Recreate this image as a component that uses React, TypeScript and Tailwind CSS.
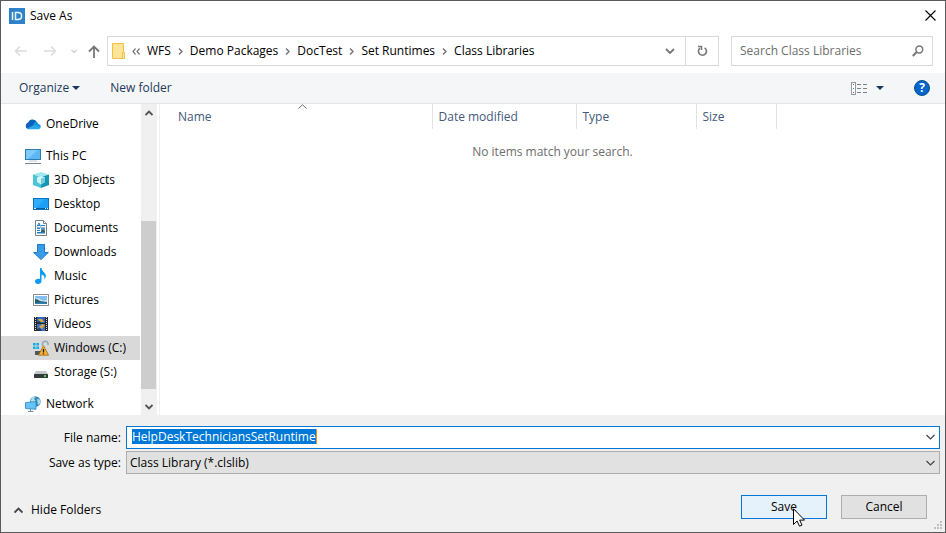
import { useEffect, useRef, type ReactNode } from "react";

type StrokeProps = { className?: string; d: string; w: number; h: number; sw?: number };

function Stroke({ className = "", d, w, h, sw = 1 }: StrokeProps) {
  return (
    <svg aria-hidden="true" className={`shrink-0 ${className}`} width={w} height={h} viewBox={`0 0 ${w} ${h}`} fill="none" stroke="currentColor" strokeWidth={sw}>
      <path d={d} />
    </svg>
  );
}

function Icon({ children }: { children: ReactNode }) {
  return (
    <svg aria-hidden="true" className="shrink-0" width="16" height="16" viewBox="0 0 16 16">
      {children}
    </svg>
  );
}

const icons: Record<string, ReactNode> = {
  OneDrive: (
    <Icon>
      <path d="M3.2 7A4.6 4.6 0 0 1 11.8 6L10 10 3 9Z" fill="#0364b8" />
      <path d="M3.5 13.2A3.4 3.4 0 0 1 3.7 6.5Q5.4 6.2 6.8 7.4L10 10 4 13.2Z" fill="#0f5fbd" />
      <path d="M8 8.2Q9.5 5.6 12 6.2 13 6.5 13.2 8 15.6 8.4 15.9 10.6L14 12Z" fill="#1490df" />
      <path d="M2 12.6L9.4 8.7 15.8 11.3Q15.2 13.3 13.2 13.3H3.6Z" fill="#28a8ea" />
    </Icon>
  ),
  "This PC": (
    <Icon>
      <rect x="0.5" y="1.5" width="15" height="10" fill="#5cb8f5" stroke="#2e7cab" />
      <path d="M1 2H13L3 11H1Z" fill="#8bd2ff" opacity=".7" />
      <rect x="4" y="12.5" width="8" height="1" fill="#b9c8d4" />
      <rect x="0" y="15" width="16" height="1" fill="#73899c" />
    </Icon>
  ),
  "3D Objects": (
    <Icon>
      <path d="M8 0L16 2.4 8 5 0 2.4Z" fill="#a2e6ef" />
      <path d="M0 2.4L8 5V16L0 13Z" fill="#4cc5d6" />
      <path d="M16 2.4L8 5V16L16 13Z" fill="#1696b2" />
      <path d="M4 5.3L8 4 12 5.3V10L8 12.5 4 10Z" fill="#d1f5f7" />
      <path d="M8 6.5L12 5.3V10L8 12.5Z" fill="#71cedc" />
    </Icon>
  ),
  Desktop: (
    <Icon>
      <rect x="0.5" y="2.5" width="15" height="11" fill="#1ca0f5" stroke="#0873c5" />
      <path d="M1 3H12L3 12H1Z" fill="#40b9ff" opacity=".5" />
      <path d="M0 12.5H16" stroke="#075b9b" />
      <path d="M1 12.5H3M12 12.5H13M14 12.5H15" stroke="#d5efff" />
    </Icon>
  ),
  Documents: (
    <Icon>
      <path d="M2.5 .5H10.5L13.5 3.5V15.5H2.5Z" fill="#fff" stroke="#777f87" />
      <path d="M10.5 .5V3.5H13.5" fill="#edf0f2" stroke="#777f87" />
      <path d="M4 6.5L6 3 7.5 6.5M4.5 5.5H7M8 5.5H12M4 8.5H7M4 10.5H7M4 12.5H12" fill="none" stroke="#1782c7" />
      <path d="M4 7.5H12M4 13.5H12" stroke="#9fb6c6" />
      <rect x="8" y="8" width="4" height="4" fill="#4e9bc8" />
      <path d="M8 12V11L10 9.5 12 11V12Z" fill="#3d5f56" />
    </Icon>
  ),
  Downloads: (
    <Icon>
      <path d="M4.5 .5H11.5V8.5H15.3L8 15.6 .7 8.5H4.5Z" fill="#389be8" stroke="#1d7aca" />
    </Icon>
  ),
  Music: (
    <Icon>
      <path d="M7 0H8.5C8.7 3.5 13 4.5 12.8 8.2 12.7 9.9 11.7 11 11.2 11.4 12 8.7 10.8 7.4 8.5 6.6V13C8.5 15 6.8 16 5 16 3.3 16 2 15 2 13.5 2 11.5 4.2 10.3 7 11Z" fill="#0a9cf5" />
    </Icon>
  ),
  Pictures: (
    <Icon>
      <rect x="0.5" y="2.5" width="15" height="11" fill="#fff" stroke="#8a8f94" />
      <rect x="2" y="4" width="12" height="8" fill="#83bff0" />
      <path d="M2 7Q5 5 8 8 11 9 14 8V10H2Z" fill="#d8eef5" />
      <path d="M2 7Q5 7 7 9L14 10V12H2Z" fill="#265b65" />
      <path d="M2 11Q8 9 14 11V12H2Z" fill="#347bb0" />
    </Icon>
  ),
  Videos: (
    <Icon>
      <rect x="1" y="1" width="14" height="14" fill="#27272b" />
      <path d="M2.5 1V15M13.5 1V15" stroke="#d7d7d7" strokeDasharray="1 1" />
      <rect x="4" y="1" width="8" height="6" fill="#2f63bc" />
      <rect x="4" y="8" width="8" height="7" fill="#3e72c9" />
      <path d="M5 3H9L11 6H7ZM6 11L9 8 12 9 9 13Z" fill="#d6a73c" />
      <path d="M4 6L7 5 8 7H4ZM4 13L7 12 9 15H4Z" fill="#263b58" />
    </Icon>
  ),
  "Windows (C:)": (
    <Icon>
      <path d="M0 3H2.6V5.6H0ZM3.4 3H6V5.6H3.4ZM0 6.4H2.6V9H0ZM3.4 6.4H6V9H3.4Z" fill="#10aee8" />
      <path d="M9.5 6V3.5A2.8 2.8 0 0 1 15 3.5V5" fill="none" stroke="#91a9b9" strokeWidth="1.5" />
      <path d="M2 11H8V15H2Z" fill="#50585e" />
      <path d="M10.5 5.8L15.6 15.2H5.4Z" fill="#f7b32b" stroke="#9a691c" strokeWidth=".8" />
      <path d="M10.5 9V12.5M10.5 13.2V14.3" stroke="#1c1c1c" strokeWidth="1.3" />
    </Icon>
  ),
  "Storage (S:)": (
    <Icon>
      <path d="M3 7H13L15 10H1Z" fill="#c3c6c8" />
      <rect x="1" y="10" width="14" height="4" rx=".5" fill="#35393b" />
      <rect x="11" y="11" width="2" height="2" fill="#39db59" />
    </Icon>
  ),
  Network: (
    <Icon>
      <circle cx="10.3" cy="5.5" r="5.3" fill="#3a86b4" />
      <path d="M7 1.5Q9 0 11 .5L9 3 11 5 8 7 5.3 5ZM12 3L15 3.5 15.5 7 13 9Z" fill="#a8ddea" />
      <path d="M.5 6.5L11 5.7V13.3L.5 12.5Z" fill="#64c4f7" stroke="#2a86b8" strokeWidth=".8" />
      <path d="M5.5 13V15M3 15.5H8.5" stroke="#6a93ad" />
    </Icon>
  ),
};

function TreeItem({ name, child, selected }: { name: string; child?: boolean; selected?: boolean }) {
  return (
    <li className={`shrink-0 ${selected ? "bg-[#d9d9d9]" : ""}`}>
      <button type="button" className={`flex h-6 w-full items-center gap-[5px] text-left ${child ? "pl-8" : "pl-6"}`}>
        {icons[name]}
        {name}
      </button>
    </li>
  );
}

const folders = ["3D Objects", "Desktop", "Documents", "Downloads", "Music", "Pictures", "Videos", "Windows (C:)", "Storage (S:)"];
const crumbs = ["WFS", "Demo Packages", "DocTest", "Set Runtimes", "Class Libraries"];

function TitleBar() {
  return (
    <header className="flex h-[29px] shrink-0 items-center gap-[5px] pl-2 pr-[9px]">
      <svg aria-hidden="true" width="16" height="16" viewBox="0 0 16 16">
        <rect width="16" height="16" fill="#2e83c8" />
        <path d="M3.5 4V12M6.5 4.5H9Q12.6 4.5 12.6 8T9 11.5H6.5Z" fill="none" stroke="#e8f5ff" strokeWidth="1.5" />
      </svg>
      <h1 className="flex-1">Save As</h1>
      <button type="button" aria-label="Close">
        <Stroke d="M.5 .5L10.5 10.5M10.5 .5L.5 10.5" w={11} h={11} sw={1.1} />
      </button>
    </header>
  );
}

function NavBar() {
  return (
    <nav className="flex h-[43px] shrink-0 items-center pb-px pl-[13px] pr-3 text-[#777]">
      <button type="button" aria-label="Back" className="mr-[17px] text-[#ddd]">
        <Stroke d="M13 6H1.5M6 1.5L1.5 6 6 10.5" w={13} h={12} sw={1.6} />
      </button>
      <button type="button" aria-label="Forward" className="mr-[14px] text-[#ddd]">
        <Stroke d="M0 6H11.5M7 1.5L11.5 6 7 10.5" w={13} h={12} sw={1.6} />
      </button>
      <button type="button" aria-label="Recent locations" className="mr-[11px] text-[#d3d3d3]">
        <Stroke d="M.5 1L3 3.5 5.5 1" w={6} h={5} sw={1.4} />
      </button>
      <button type="button" aria-label="Up" className="mr-[7px]">
        <Stroke d="M6 13V1.5M1 6.5L6 1.5 11 6.5" w={12} h={13} sw={1.8} />
      </button>
      <div className="flex h-[30px] min-w-0 flex-1 items-center border border-[#d9d9d9]">
        <svg aria-hidden="true" className="ml-1 shrink-0" width="13" height="16" viewBox="0 0 13 16">
          <path d="M.5 .5H11.5V9.5H12.5V15.5H.5Z" fill="#ffe595" stroke="#edc14b" />
          <path d="M10.5 15V9.5H12.5" fill="none" stroke="#edc14b" />
        </svg>
        <Stroke className="mx-[7px]" d="M3.5 .5L1 3.5 3.5 6.5M7.5 .5L5 3.5 7.5 6.5" w={8} h={7} sw={1.2} />
        <ol className="flex min-w-0 flex-1 items-center gap-[7px] text-black">
          {crumbs.map((c, i) => (
            <li key={c} className="flex items-center gap-[7px] whitespace-nowrap">
              {i > 0 && <Stroke className="text-[#777]" d="M1 .5L4 3.5 1 6.5" w={5} h={7} sw={1.5} />}
              <button type="button">{c}</button>
            </li>
          ))}
        </ol>
        <button type="button" aria-label="Previous locations" className="mr-[10px]">
          <Stroke d="M1 1L5 5 9 1" w={10} h={7} sw={1.8} />
        </button>
        <button type="button" aria-label="Refresh" className="flex h-full w-[33px] items-center justify-center border-l border-[#d9d9d9]">
          <svg width="11" height="12" viewBox="0 0 11 12" fill="none" stroke="currentColor" strokeWidth="1.6">
            <path d="M7.6 2.9A4 4 0 1 1 3 3.1" />
            <path d="M1 1.5H4.5V5" strokeWidth="1.5" />
          </svg>
        </button>
      </div>
      <div className="ml-3 flex h-[30px] w-[202px] shrink-0 items-center border border-[#d9d9d9] px-2">
        <input type="search" aria-label="Search Class Libraries" placeholder="Search Class Libraries" className="min-w-0 flex-1 outline-none placeholder:text-[#6d6d6d]" />
        <svg aria-hidden="true" width="12" height="12" viewBox="0 0 12 12" fill="none" stroke="currentColor">
          <circle cx="7.3" cy="4.5" r="3.4" strokeWidth="1.5" />
          <path d="M4.8 7L.8 11" strokeWidth="2" />
        </svg>
      </div>
    </nav>
  );
}

function CaretDown() {
  return (
    <svg aria-hidden="true" width="8" height="4" viewBox="0 0 8 4">
      <path d="M0 0H8L4 4Z" fill="#1c355e" />
    </svg>
  );
}

function Toolbar() {
  return (
    <div className="flex h-[31px] shrink-0 items-center border-b border-[#e3e5e8] bg-[#f5f6f7] pl-[18px] pr-[15px] text-[#1e395b]">
      <button type="button" className="flex items-center gap-[3px]">
        Organize
        <CaretDown />
      </button>
      <button type="button" className="ml-[30px]">New folder</button>
      <button type="button" aria-label="Change your view" className="ml-auto flex items-center gap-2">
        <svg aria-hidden="true" width="17" height="13" viewBox="0 0 17 13" fill="none">
          <rect x=".5" y=".5" width="4" height="12" fill="#fff" stroke="#999" />
          <path d="M2 2.5H3" stroke="#4b82c4" />
          <path d="M2 6.5H3" stroke="#4b82c4" />
          <path d="M2 10.5H3" stroke="#d33" />
          <path d="M6 2.5H10M12 2.5H16M6 6.5H10M12 6.5H16M6 10.5H10M12 10.5H16" stroke="#7d8289" />
        </svg>
        <CaretDown />
      </button>
      <button type="button" aria-label="Help" className="ml-[30px] flex size-4 items-center justify-center rounded-full border border-[#0b4f93] bg-[#0066cc] font-bold text-white">
        ?
      </button>
    </div>
  );
}

function FolderTree() {
  return (
    <div className="flex w-[159px] shrink-0 gap-px border-r border-[#f0f0f0]">
      <ul className="flex w-[139px] flex-col overflow-hidden pt-2">
        <TreeItem name="OneDrive" />
        <li className="mt-2 shrink-0">
          <ul>
            <TreeItem name="This PC" />
            {folders.map((f) => (
              <TreeItem key={f} name={f} child selected={f === "Windows (C:)"} />
            ))}
          </ul>
        </li>
        <li className="mt-2 shrink-0">
          <ul>
            <TreeItem name="Network" />
          </ul>
        </li>
      </ul>
      <div className="flex w-4 flex-col items-center bg-[#f0f0f0] text-[#505050]">
        <button type="button" aria-label="Scroll up" className="flex h-[17px] items-center">
          <Stroke d="M.5 5L4 1.5 7.5 5" w={8} h={6} sw={1.8} />
        </button>
        <div className="flex w-full flex-1 flex-col pr-px">
          <div className="flex-[100]" />
          <div className="flex-[168] bg-[#cdcdcd]" />
          <div className="flex-[9]" />
        </div>
        <button type="button" aria-label="Scroll down" className="flex h-[17px] items-center">
          <Stroke d="M.5 1L4 4.5 7.5 1" w={8} h={6} sw={1.8} />
        </button>
      </div>
    </div>
  );
}

function FileList() {
  const th = "h-[25px] border-r border-[#e3e3e3] pl-[6px] text-left font-normal";
  return (
    <main className="min-w-0 flex-1">
      <table className="w-full table-fixed">
        <thead className="text-[#43597c]">
          <tr>
            <th className={`${th} relative w-[272px] pl-[18px]`} aria-sort="ascending">
              Name
              <Stroke className="absolute left-[138px] top-0 text-[#666]" d="M.5 4.5L4.5 .8 8.5 4.5" w={9} h={5} />
            </th>
            <th className={`${th} w-[144px]`}>Date modified</th>
            <th className={`${th} w-[120px]`}>Type</th>
            <th className={`${th} w-[80px]`}>Size</th>
            <td />
          </tr>
        </thead>
        <tbody>
          <tr>
            <td colSpan={5} className="h-[46px] text-center text-[#6d6d6d]">
              No items match your search.
            </td>
          </tr>
        </tbody>
      </table>
    </main>
  );
}

function Footer() {
  const nameRef = useRef<HTMLInputElement>(null);
  useEffect(() => {
    nameRef.current?.focus();
    nameRef.current?.select();
  }, []);
  const chevron = "M.5 1L4.5 5 8.5 1";
  return (
    <form className="relative flex h-[117px] shrink-0 flex-col bg-[#f0f0f0] pt-[11px]" onSubmit={(e) => e.preventDefault()}>
      <div className="grid grid-cols-[120px_1fr] items-center gap-x-[5px] gap-y-[2px] pr-[5px]">
        <label htmlFor="file-name" className="text-right">File name:</label>
        <div className="flex h-[23px] items-center border border-[#0078d7] bg-white pb-[2px] pl-[5px] pr-1">
          <input
            id="file-name"
            ref={nameRef}
            defaultValue="HelpDeskTechniciansSetRuntime"
            className="h-[15px] leading-[15px] outline-none [field-sizing:content] selection:bg-[#0078d7] selection:text-white"
          />
          <span className="h-[15px] w-px bg-[#ff8728]" />
          <Stroke className="ml-auto text-[#444]" d={chevron} w={9} h={6} sw={1.2} />
        </div>
        <label htmlFor="file-type" className="text-right">Save as type:</label>
        <div className="relative flex h-[23px] items-center">
          <select id="file-type" className="size-full appearance-none border border-[#adadad] bg-[#e1e1e1] pl-[3px] outline-none">
            <option>Class Library (*.clslib)</option>
          </select>
          <Stroke className="pointer-events-none absolute right-[5px] text-[#444]" d={chevron} w={9} h={6} sw={1.2} />
        </div>
      </div>
      <div className="mt-[21px] flex items-center gap-[14px] pl-[13px] pr-[18px]">
        <button type="button" className="mr-auto flex items-center gap-2 pt-[6px]">
          <Stroke className="text-[#444]" d="M.5 5.5L4.5 1.5 8.5 5.5" w={9} h={7} sw={1.8} />
          Hide Folders
        </button>
        <button type="submit" className="relative h-6 w-[86px] border border-[#0078d7] bg-[#e5f1fb]">
          Save
          <svg aria-hidden="true" className="absolute left-[51px] top-3" width="12" height="19" viewBox="0 0 12 19">
            <path d="M.5 .8V16.5L4.1 13 6.5 18.2 9 17.1 6.7 12.1H11.5Z" fill="#fff" stroke="#000" />
          </svg>
        </button>
        <button type="button" className="h-6 w-[86px] border border-[#adadad] bg-[#e1e1e1]">Cancel</button>
      </div>
      <svg aria-hidden="true" className="absolute bottom-[3px] right-[3px]" width="8" height="8" viewBox="0 0 8 8" fill="#bfbfbf">
        <path d="M6 0H8V2H6ZM3 3H5V5H3ZM6 3H8V5H6ZM0 6H2V8H0ZM3 6H5V8H3ZM6 6H8V8H6Z" />
      </svg>
    </form>
  );
}

export default function App() {
  return (
    <div className="flex h-screen min-h-[420px] flex-col border border-[#5a5a5a] bg-white font-['Open_Sans','Noto_Sans',sans-serif] text-xs text-black">
      <TitleBar />
      <NavBar />
      <Toolbar />
      <div className="flex min-h-0 flex-1">
        <FolderTree />
        <FileList />
      </div>
      <Footer />
    </div>
  );
}
